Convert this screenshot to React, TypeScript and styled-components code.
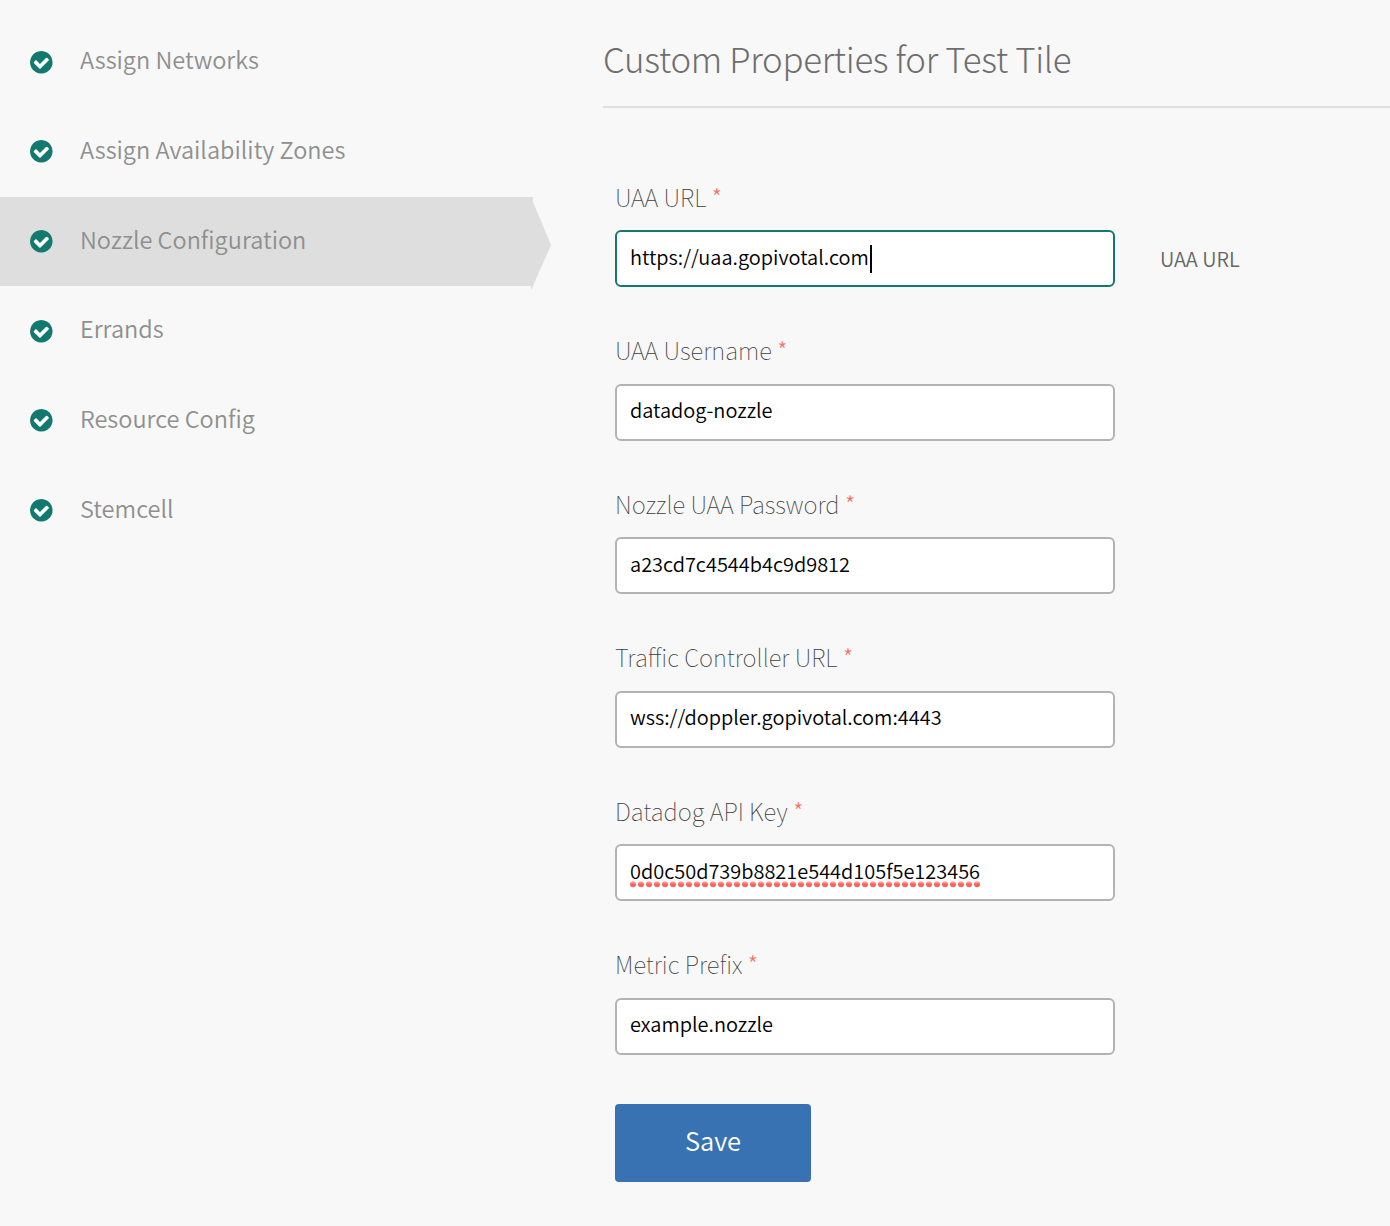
import React from "react";
import styled, { createGlobalStyle } from "styled-components";

const sans = `"Noto Sans CJK SC", "Open Sans", sans-serif`;

const Global = createGlobalStyle`
  * { box-sizing: border-box; }
  body { margin: 0; background: #f8f8f8; font-family: ${sans}; }
`;

const Page = styled.div`
  display: flex;
  width: 1390px;
  height: 1226px;
  overflow: hidden;
`;

const Sidebar = styled.ul`
  list-style: none;
  margin: 0;
  padding: 17.3px 0 0;
  width: 551px;
  flex: none;
`;

const Item = styled.li<{ $active?: boolean }>`
  position: relative;
  width: 533px;
  height: 89.7px;
  display: flex;
  align-items: center;
  gap: 27.6px;
  padding-left: 29.8px;
  background: ${(p) => (p.$active ? "#dedede" : "transparent")};
`;

const ItemText = styled.span`
  padding-bottom: 5.6px;
  font-size: 23.5px;
  line-height: 36px;
  font-weight: 350;
  color: #8f8f8f;
`;

const Arrow = styled.svg`
  position: absolute;
  left: 531px;
  top: 0;
`;

const Icon = styled.svg`
  overflow: visible;
  margin-bottom: 0.4px;
`;

const Main = styled.main`
  flex: 1;
  padding-left: 52px;
`;

const Title = styled.h1`
  margin: 0;
  height: 108px;
  padding-top: 29px;
  border-bottom: 2px solid #e0e0e0;
  font-weight: 300;
  font-size: 34.8px;
  line-height: 58px;
  letter-spacing: -0.31px;
  color: #6e6e6e;
`;

const Form = styled.form`
  display: flex;
  flex-direction: column;
  padding: 71px 0 0 12px;
`;

const Field = styled.div`
  display: flex;
  flex-direction: column;
  height: 153.5px;
`;

const Label = styled.label`
  display: block;
  height: 51.3px;
  margin-top: -0.3px;
  font-size: 23.9px;
  line-height: 35px;
  font-weight: 100;
  color: #3c3c3c;
`;

const Star = styled.span`
  font-weight: 300;
  font-size: 24px;
  color: #ff6b60;
`;

const Row = styled.div`
  display: flex;
  gap: 45px;
  align-items: center;
`;

const Box = styled.div<{ $focus?: boolean }>`
  width: 500px;
  height: 57px;
  display: flex;
  align-items: flex-start;
  background: #fff;
  border: 2px solid ${(p) => (p.$focus ? "#12796e" : "#b3b3b3")};
  border-radius: 6px;
  padding: 0 13px;
`;

const Value = styled.span`
  position: relative;
  margin-top: -0.3px;
  font-size: 19.95px;
  line-height: 49px;
  font-weight: 350;
  color: #000;
`;

const Caret = styled.span`
  width: 2px;
  height: 28px;
  margin: 13px 0 0 1px;
  background: #000;
`;

const Squiggle = styled.svg`
  position: absolute;
  left: 0;
  top: 35.3px;
`;

const Hint = styled.span`
  font-size: 19.95px;
  line-height: 30px;
  font-weight: 350;
  color: #666;
`;

const Save = styled.button`
  width: 196px;
  height: 78px;
  margin-top: 4px;
  padding: 0 0 7px;
  border: 0;
  border-radius: 4px;
  background: #3872b2;
  color: #fff;
  font-family: ${sans};
  font-weight: 350;
  font-size: 25.5px;
`;

const CheckCircle = () => (
  <Icon width="22.6" height="22.6" viewBox="128 128 1536 1536">
    <circle cx="896" cy="896" r="700" fill="#fff" />
    <path
      fill="#12796e"
      d="M1412 734q0-28-18-46l-91-90q-19-19-45-19t-45 19l-408 407-226-226q-19-19-45-19t-45 19l-91 90q-18 18-18 46 0 27 18 45l362 362q19 19 45 19 27 0 46-19l543-543q18-18 18-45zm252 162q0 209-103 385.5t-279.5 279.5-385.5 103-385.5-103-279.5-279.5-103-385.5 103-385.5 279.5-279.5 385.5-103 385.5 103 279.5 279.5 103 385.5z"
    />
  </Icon>
);

const SpellingDots = () => (
  <Squiggle width="352" height="7">
    <defs>
      <linearGradient id="dot" x1="0" y1="0" x2="0" y2="1">
        <stop offset="0" stopColor="#ffb3ae" />
        <stop offset="0.6" stopColor="#fb5a50" />
        <stop offset="1" stopColor="#fb6a60" />
      </linearGradient>
    </defs>
    {Array.from({ length: 44 }, (_, i) => (
      <circle key={i} cx={3 + i * 8} cy="3.2" r="3" fill="url(#dot)" />
    ))}
  </Squiggle>
);

const items = [
  "Assign Networks",
  "Assign Availability Zones",
  "Nozzle Configuration",
  "Errands",
  "Resource Config",
  "Stemcell",
];

interface FieldData {
  label: string;
  value: string;
  hint?: string;
  focus?: boolean;
  misspelled?: boolean;
}

const fields: FieldData[] = [
  { label: "UAA URL", value: "https://uaa.gopivotal.com", hint: "UAA URL", focus: true },
  { label: "UAA Username", value: "datadog-nozzle" },
  { label: "Nozzle UAA Password", value: "a23cd7c4544b4c9d9812" },
  { label: "Traffic Controller URL", value: "wss://doppler.gopivotal.com:4443" },
  { label: "Datadog API Key", value: "0d0c50d739b8821e544d105f5e123456", misspelled: true },
  { label: "Metric Prefix", value: "example.nozzle" },
];

export default function App() {
  return (
    <Page>
      <Global />
      <Sidebar>
        {items.map((text, i) => (
          <Item key={text} $active={i === 2}>
            <CheckCircle />
            <ItemText>{text}</ItemText>
            {i === 2 && (
              <Arrow width="20" height="95">
                <path d="M0 0.500L2 5L20 48L0 93.500z" fill="#dedede" />
              </Arrow>
            )}
          </Item>
        ))}
      </Sidebar>
      <Main>
        <Title>Custom Properties for Test Tile</Title>
        <Form>
          {fields.map((f) => (
            <Field key={f.label}>
              <Label>
                {f.label} <Star>*</Star>
              </Label>
              <Row>
                <Box $focus={f.focus}>
                  <Value>
                    {f.value}
                    {f.misspelled && <SpellingDots />}
                  </Value>
                  {f.focus && <Caret />}
                </Box>
                {f.hint && <Hint>{f.hint}</Hint>}
              </Row>
            </Field>
          ))}
          <Save type="button">Save</Save>
        </Form>
      </Main>
    </Page>
  );
}
